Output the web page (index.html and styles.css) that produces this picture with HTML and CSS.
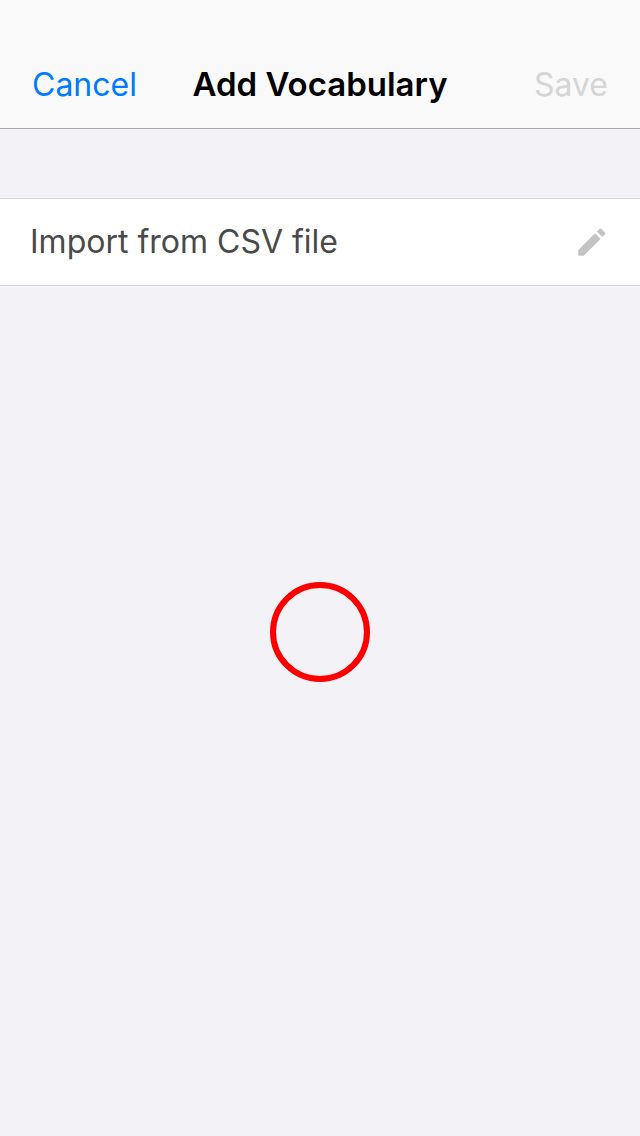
FILE: index.html
```html
<!DOCTYPE html>
<html lang="en">
<head>
<meta charset="utf-8">
<meta name="viewport" content="width=device-width, initial-scale=1">
<title>Add Vocabulary</title>
<link rel="stylesheet" href="styles.css">
</head>
<body>
<header class="navbar">
  <button class="nav-button" type="button">Cancel</button>
  <h1 class="nav-title">Add Vocabulary</h1>
  <button class="nav-button nav-save" type="button" disabled>Save</button>
</header>
<main class="content">
  <button class="import-row" type="button">
    <span>Import from CSV file</span>
    <svg class="pencil" viewBox="0 0 28 28" aria-hidden="true"><path d="M17 5.2 22.6 10.9 6.2 27.3Q5.7 27.8 5 27.8H1Q.2 27.8.2 27V22.8Q.2 22 .8 21.4ZM18.9 3.5 21.5.9Q22.5 0 23.5.9L27 4.4Q28 5.4 27 6.5L24.4 9Z"/></svg>
  </button>
</main>
<div class="touch-ring" aria-hidden="true"></div>
</body>
</html>
```
FILE: styles.css
```css
* {
  box-sizing: border-box;
}

body {
  margin: 0;
  min-height: 100vh;
  background: #f2f2f7;
  font-family: Inter, "Liberation Sans", sans-serif;
}

button {
  margin: 0;
  border: 0;
  background: none;
  font: inherit;
  text-align: left;
}

.navbar {
  display: grid;
  grid-template-columns: 1fr auto 1fr;
  align-items: baseline;
  padding: 64px 32px 23px;
  border-bottom: 1px solid #a9a9ad;
  background: #f9f9f9;
}

.nav-button {
  justify-self: start;
  padding: 0;
  color: #007aff;
  font-size: 32px;
  line-height: 40px;
}

.nav-save {
  justify-self: end;
  color: #d5d5d5;
}

.nav-title {
  margin: 0;
  font-size: 33px;
  font-weight: 600;
  line-height: 40px;
}

.content {
  padding-top: 69px;
}

.import-row {
  display: flex;
  align-items: center;
  justify-content: space-between;
  width: 100%;
  padding: 23px 34px 23px 30px;
  border-top: 1px solid #d4d3d8;
  border-bottom: 1px solid #d4d3d8;
  background: #fff;
  color: #4a4a4a;
  font-size: 32px;
  line-height: 40px;
}

.pencil {
  width: 28px;
  height: 28px;
  fill: #c4c4c4;
}

.touch-ring {
  position: absolute;
  top: calc(50% + 64px);
  left: 50%;
  width: 100px;
  height: 100px;
  border: 6px solid #f00;
  border-radius: 50%;
  transform: translate(-50%, -50%);
}
```
